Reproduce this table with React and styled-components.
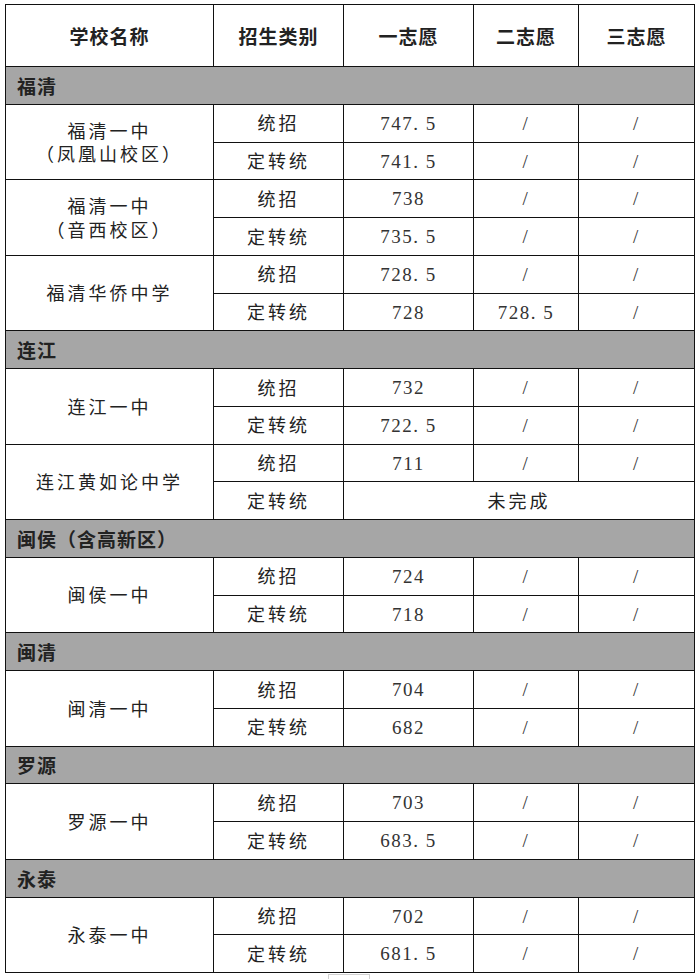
import React from 'react';
import styled, { createGlobalStyle } from 'styled-components';

const GlobalStyle = createGlobalStyle`
  body {
    margin: 0;
    background: #ffffff;
    font-family: "Noto Sans CJK SC", "Liberation Serif", serif;
    color: #222;
  }
`;

const Page = styled.div`
  padding: 4px 0 0 5px;
`;

const Table = styled.table`
  width: 689px;
  border-collapse: collapse;
  table-layout: fixed;
  border: 1.5px solid #111;
`;

const HeadCell = styled.th`
  height: 61px;
  border: 1px solid #111;
  font-size: 19px;
  font-weight: 700;
  letter-spacing: 1px;
  text-align: center;
  padding: 0;
`;

const RegionRow = styled.tr`
  background: #a6a6a6;
  height: 37.75px;
`;

const RegionCell = styled.td`
  border: 1px solid #111;
  font-size: 19px;
  font-weight: 700;
  padding: 0 0 0 11px;
  text-align: left;
  letter-spacing: 1px;
`;

const Row = styled.tr`
  height: 37.75px;
`;

const Cell = styled.td`
  border: 1px solid #111;
  text-align: center;
  padding: ${p => (p.$num ? '2px 0 0' : '0')};
  font-size: ${p => (p.$num ? '19px' : '18px')};
  font-weight: 400;
  letter-spacing: ${p => (p.$num ? '1.5px' : '3px')};
  font-family: ${p =>
    p.$num ? '"Liberation Serif", serif' : '"Noto Sans CJK SC", sans-serif'};
  line-height: 1.3;
  color: ${p => (p.$num ? '#333' : '#222')};
`;

const Tab = styled.div`
  width: 40px;
  height: 8px;
  margin: 1px 0 0 323px;
  border: 1px solid #d0d0d0;
  border-bottom: none;
`;

const data = [
  {
    region: '福清',
    schools: [
      { name: ['福清一中', '（凤凰山校区）'], rows: [['统招', '747.5', '/', '/'], ['定转统', '741.5', '/', '/']] },
      { name: ['福清一中', '（音西校区）'], rows: [['统招', '738', '/', '/'], ['定转统', '735.5', '/', '/']] },
      { name: ['福清华侨中学'], rows: [['统招', '728.5', '/', '/'], ['定转统', '728', '728.5', '/']] },
    ],
  },
  {
    region: '连江',
    schools: [
      { name: ['连江一中'], rows: [['统招', '732', '/', '/'], ['定转统', '722.5', '/', '/']] },
      { name: ['连江黄如论中学'], rows: [['统招', '711', '/', '/'], ['定转统', '未完成']] },
    ],
  },
  {
    region: '闽侯（含高新区）',
    schools: [{ name: ['闽侯一中'], rows: [['统招', '724', '/', '/'], ['定转统', '718', '/', '/']] }],
  },
  {
    region: '闽清',
    schools: [{ name: ['闽清一中'], rows: [['统招', '704', '/', '/'], ['定转统', '682', '/', '/']] }],
  },
  {
    region: '罗源',
    schools: [{ name: ['罗源一中'], rows: [['统招', '703', '/', '/'], ['定转统', '683.5', '/', '/']] }],
  },
  {
    region: '永泰',
    schools: [{ name: ['永泰一中'], rows: [['统招', '702', '/', '/'], ['定转统', '681.5', '/', '/']] }],
  },
];

const fmt = v => v.replace('.', '. ');

const App = () => (
  <Page>
    <GlobalStyle />
    <Table>
      <colgroup>
        <col style={{ width: 208 }} />
        <col style={{ width: 130 }} />
        <col style={{ width: 130 }} />
        <col style={{ width: 105 }} />
        <col style={{ width: 116 }} />
      </colgroup>
      <thead>
        <tr>
          <HeadCell>学校名称</HeadCell>
          <HeadCell>招生类别</HeadCell>
          <HeadCell>一志愿</HeadCell>
          <HeadCell>二志愿</HeadCell>
          <HeadCell>三志愿</HeadCell>
        </tr>
      </thead>
      <tbody>
        {data.map(group => (
          <React.Fragment key={group.region}>
            <RegionRow>
              <RegionCell colSpan={5}>{group.region}</RegionCell>
            </RegionRow>
            {group.schools.map(school =>
              school.rows.map((r, i) => (
                <Row key={school.name.join() + i}>
                  {i === 0 && (
                    <Cell rowSpan={2}>
                      {school.name.map(n => (
                        <div key={n}>{n}</div>
                      ))}
                    </Cell>
                  )}
                  <Cell>{r[0]}</Cell>
                  {r.length === 2 ? (
                    <Cell colSpan={3}>{r[1]}</Cell>
                  ) : (
                    <>
                      <Cell $num>{fmt(r[1])}</Cell>
                      <Cell $num>{r[2] === '/' ? '/' : fmt(r[2])}</Cell>
                      <Cell $num>{r[3]}</Cell>
                    </>
                  )}
                </Row>
              ))
            )}
          </React.Fragment>
        ))}
      </tbody>
    </Table>
    <Tab />
  </Page>
);

export default App;
